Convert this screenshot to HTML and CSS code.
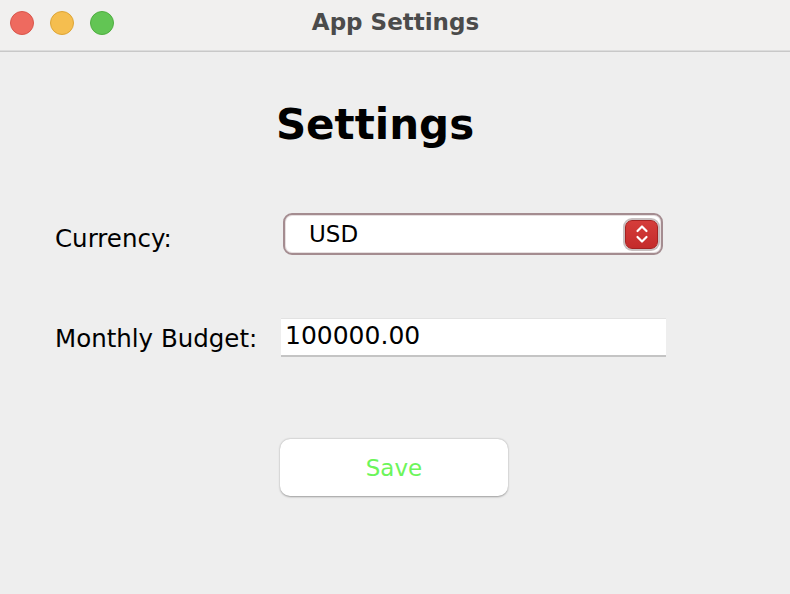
FILE: index.html
```html
<!DOCTYPE html>
<html>
<head>
<meta charset="utf-8">
<link rel="stylesheet" href="styles.css">
</head>
<body>
<div class="window">
  <div class="titlebar">
    <div class="lights">
      <span class="light red"></span>
      <span class="light yellow"></span>
      <span class="light green"></span>
    </div>
    <div class="title">App Settings</div>
  </div>
  <div class="content">
    <h1 class="heading">Settings</h1>
    <div class="form">
      <label class="label label-currency">Currency:</label>
      <div class="combo">
        <span class="combo-value">USD</span>
        <span class="stepper">
          <svg width="16" height="26" viewBox="0 0 16 26">
            <path d="M3.5 10 L8 5.5 L12.5 10" fill="none" stroke="#fff" stroke-width="2.2" stroke-linecap="round" stroke-linejoin="round"/>
            <path d="M3.5 16 L8 20.5 L12.5 16" fill="none" stroke="#fff" stroke-width="2.2" stroke-linecap="round" stroke-linejoin="round"/>
          </svg>
        </span>
      </div>
      <label class="label label-budget">Monthly Budget:</label>
      <div class="field">100000.00</div>
    </div>
    <div class="actions">
      <button class="save">Save</button>
    </div>
  </div>
</div>
</body>
</html>
```
FILE: styles.css
```css
html, body {
  margin: 0;
  padding: 0;
}
body {
  width: 790px;
  height: 594px;
  overflow: hidden;
  background: #eeeeee;
  font-family: "DejaVu Sans", sans-serif;
}
.window {
  width: 790px;
  height: 594px;
  display: flex;
  flex-direction: column;
  background: #eeeeee;
}
.titlebar {
  height: 50px;
  background: #f1f0ef;
  border-bottom: 1px solid #dcdcdc;
  box-shadow: 0 1px 0 #c8c8c8;
  position: relative;
  display: flex;
  align-items: center;
  justify-content: center;
  flex-shrink: 0;
}
.lights {
  position: absolute;
  left: 10px;
  top: 11px;
  display: flex;
  gap: 16px;
}
.light {
  width: 24px;
  height: 24px;
  border-radius: 50%;
  box-sizing: border-box;
}
.red { background: #ee6a5f; border: 1px solid #d9564b; }
.yellow { background: #f5be4f; border: 1px solid #dea536; }
.green { background: #62c554; border: 1px solid #4fae40; }
.title {
  font-family: "DejaVu Sans", sans-serif;
  font-weight: bold;
  font-size: 23px;
  color: #4b4b4b;
  margin-top: -6px;
  margin-left: 1px;
}
.content {
  padding: 48px 0 0 55px;
}
.heading {
  margin: 0;
  width: 640px;
  text-align: center;
  font-size: 42px;
  font-weight: bold;
  color: #000;
  line-height: 52px;
}
.form {
  margin-top: 62px;
  display: grid;
  grid-template-columns: 226px 385px;
  row-gap: 63px;
  align-items: center;
}
.label {
  font-size: 24.5px;
  color: #000;
}
.label-currency {
  margin-top: 8px;
}
.label-budget {
  margin-top: 2px;
}
.combo {
  box-sizing: border-box;
  width: 380px;
  margin-left: 2px;
  height: 42px;
  border: 2px solid #a48c90;
  border-radius: 9px;
  background: #fff;
  display: flex;
  align-items: center;
  justify-content: space-between;
  padding: 0 3px 0 24px;
  box-shadow: inset 0 0 0 1px #e6dfe0;
}
.combo-value {
  font-size: 23px;
  color: #000;
}
.stepper {
  width: 33px;
  height: 29px;
  box-sizing: border-box;
  border-radius: 7px;
  background: linear-gradient(#d53d3a, #c42b2b);
  border: 1px solid #a32222;
  box-shadow: 0 0 0 2px #c8bfc0;
  display: flex;
  align-items: center;
  justify-content: center;
}
.field {
  box-sizing: border-box;
  width: 385px;
  height: 39px;
  background: #fff;
  border-top: 1px solid #e2e2e2;
  border-bottom: 2px solid #c4c4c4;
  font-size: 25px;
  color: #000;
  padding: 2px 0 0 4px;
}
.actions {
  margin-top: 82px;
  padding-left: 225px;
}
.save {
  width: 228px;
  height: 57px;
  background: #fff;
  border: none;
  border-radius: 10px;
  box-shadow: 0 0.5px 2px rgba(0,0,0,0.35);
  font-family: "DejaVu Sans", sans-serif;
  font-size: 23px;
  color: #6cf55a;
  cursor: pointer;
}
```
